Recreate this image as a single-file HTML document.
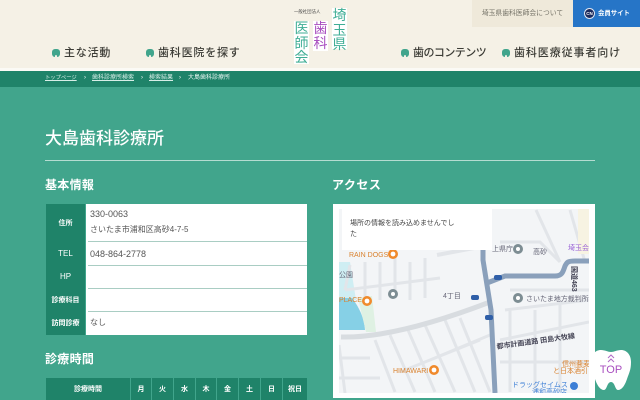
<!DOCTYPE html>
<html lang="ja"><head><meta charset="utf-8"><title>大島歯科診療所</title>
<style>
*{box-sizing:border-box;margin:0;padding:0}
html,body{width:640px;height:400px;overflow:hidden}
body{position:relative;background:#41a58c;font-family:"Liberation Sans","Noto Sans CJK JP",sans-serif;color:#444}
.a{position:absolute;white-space:nowrap}
.nav{font-size:11px;font-weight:500;color:#3c3c36;letter-spacing:.8px;line-height:16px;top:45px}
.tooth{position:absolute;top:49px;width:8px;height:8px;background:#41a58c;border-radius:3px 3px 3px 3px}
.tooth::after{content:"";position:absolute;left:3px;bottom:0;width:2px;height:2px;background:#f5f1e6;border-radius:1px 1px 0 0}
.v{position:absolute;background:#fff;width:15px;font-size:14px;line-height:14.5px;text-align:center;white-space:normal}
.lb{position:absolute;left:46px;width:39px;background:#1f8369;color:#fff;font-size:7px;font-weight:700;display:flex;align-items:center;justify-content:center}
.rw{position:absolute;left:86px;width:221px;background:#fff;font-size:9px;color:#555;padding-left:4px;display:flex;flex-direction:column;justify-content:center;line-height:14px}
.sep{position:absolute;left:88px;width:219px;height:1px;background:#a9cdc3}
.h{position:absolute;top:378px;height:22px;background:#1f8369;color:#fff;font-size:7px;font-weight:700;display:flex;align-items:center;justify-content:center}
.bc{font-size:6px;line-height:9px;top:74px;color:#d7eee7}
</style></head><body>

<div class="a" style="left:0;top:0;width:640px;height:68px;background:#f5f1e6"></div>
<div class="a" style="left:0;top:68px;width:640px;height:3px;background:#fbfaf5"></div>
<div class="a" style="left:0;top:71px;width:640px;height:16px;background:#1f8369"></div>

<div class="a" style="left:472px;top:0;width:101px;height:27px;background:#efe9da;color:#77756a;font-size:6.8px;line-height:27px;text-align:center">埼玉県歯科医師会について</div>
<div class="a" style="left:573px;top:0;width:67px;height:27px;background:#2675c7;color:#fff;font-size:6.4px;font-weight:700;line-height:27px;padding-left:25px">会員サイト</div>
<div class="a" style="left:584px;top:8px;width:11px;height:11px;border-radius:50%;background:#1b2a5c;border:1px solid #dfe6f2;color:#fff;font-size:4.5px;line-height:9px;text-align:center;font-weight:700">CN</div>

<div class="tooth" style="left:52px"></div><div class="a nav" style="left:64px">主な活動</div>
<div class="tooth" style="left:146px"></div><div class="a nav" style="left:158px">歯科医院を探す</div>
<div class="tooth" style="left:401px"></div><div class="a nav" style="left:413px;letter-spacing:-.55px">歯のコンテンツ</div>
<div class="tooth" style="left:502px"></div><div class="a nav" style="left:514px;letter-spacing:.9px">歯科医療従事者向け</div>

<div class="a" style="left:294px;top:9px;font-size:4.4px;line-height:5px;color:#444">一般社団法人</div>
<div class="v" style="left:332px;top:8px;color:#3fae95;height:41px">埼玉県</div>
<div class="v" style="left:313px;top:21px;color:#a94fc0;height:30px">歯科</div>
<div class="v" style="left:294px;top:21px;color:#3fae95;height:43px">医師会</div>

<div class="a bc" style="left:45px;font-size:5.3px;text-decoration:underline">トップページ</div>
<div class="a bc" style="left:84px;color:#fff">›</div>
<div class="a bc" style="left:92px;text-decoration:underline">歯科診療所検索</div>
<div class="a bc" style="left:141px;color:#fff">›</div>
<div class="a bc" style="left:149px;text-decoration:underline">検索結果</div>
<div class="a bc" style="left:179px;color:#fff">›</div>
<div class="a bc" style="left:188px;color:#e6f4f0">大島歯科診療所</div>

<div class="a" style="left:45px;top:128px;font-size:17px;line-height:22px;color:#fff;font-weight:500">大島歯科診療所</div>
<div class="a" style="left:45px;top:160px;width:550px;height:1px;background:#b5dcd1"></div>
<div class="a" style="left:45px;top:177px;font-size:12px;line-height:16px;color:#fff;font-weight:700;letter-spacing:.3px">基本情報</div>
<div class="a" style="left:332px;top:177px;font-size:12px;line-height:16px;color:#fff;font-weight:700;letter-spacing:.5px">アクセス</div>

<div class="lb" style="top:204px;height:37px">住所</div>
<div class="lb" style="top:241px;height:24px;font-size:8px;font-weight:400">TEL</div>
<div class="lb" style="top:265px;height:23px;font-size:8px;font-weight:400">HP</div>
<div class="lb" style="top:288px;height:23px">診療科目</div>
<div class="lb" style="top:311px;height:24px">訪問診療</div>
<div class="rw" style="top:204px;height:131px"></div>
<div class="rw a" style="top:207px;height:30px;background:none;line-height:15px"><div>330-0063</div><div style="font-size:8px">さいたま市浦和区高砂4-7-5</div></div>
<div class="rw a" style="top:243px;height:22px;background:none">048-864-2778</div>
<div class="rw a" style="top:312px;height:22px;background:none;font-size:8px">なし</div>
<div class="sep" style="top:241px"></div>
<div class="sep" style="top:265px"></div>
<div class="sep" style="top:288px"></div>
<div class="sep" style="top:311px"></div>

<div class="a" style="left:45px;top:351px;font-size:12px;line-height:16px;color:#fff;font-weight:700;letter-spacing:.3px">診療時間</div>
<div class="h" style="left:46px;width:84px">診療時間</div>
<div class="h" style="left:131px;width:20px">月</div>
<div class="h" style="left:152px;width:21px">火</div>
<div class="h" style="left:174px;width:21px">水</div>
<div class="h" style="left:196px;width:20px">木</div>
<div class="h" style="left:217px;width:21px">金</div>
<div class="h" style="left:239px;width:21px">土</div>
<div class="h" style="left:261px;width:21px">日</div>
<div class="h" style="left:283px;width:24px">祝日</div>

<div class="a" style="left:333px;top:204px;width:262px;height:194px;background:#fff"></div>
<svg class="a" style="left:339px;top:209px" width="250" height="184" viewBox="339 209 250 184">
<rect x="339" y="209" width="250" height="184" fill="#f3f5f7"/>
<path d="M339 262H350L356 300H339Z" fill="#cfeef3"/>
<path d="M339 298H352C358 306 364 316 365 330H339Z" fill="#86d0e6"/>
<path d="M358 298L372 296L376 332L366 332Z" fill="#dff1e3"/>
<g stroke="#e2e5e9" stroke-width="3" fill="none">
<path d="M350 265L345 290M365 262V300M380 262V300M395 258V298M410 262V300M425 258V298M345 290L440 278"/>
<path d="M375 340L395 392M390 335L415 392M408 330L435 392M425 325L455 392M445 320L475 392M460 318L490 392"/>
<path d="M339 358H370M339 378H380M400 372L480 340M430 360L490 335M339 345L345 393"/>
<path d="M500 340L589 322M510 392V310M535 392V310M560 392V300M500 362H589M510 290H589M536 210L560 262M570 210L585 262M500 242H540L560 262M505 310L589 300"/>
</g>
<path d="M341 337C380 338 430 325 490 302" stroke="#d8dce0" stroke-width="5" fill="none"/>
<path d="M437 255L490 245" stroke="#e2e5e9" stroke-width="4" fill="none"/>
<path d="M483 209V260L491 310L495 393" stroke="#8aa0bb" stroke-width="5" fill="none"/>
<path d="M487 283L505 276H555C562 276 563 272 565 266C567 262 568 261 575 261H589" stroke="#8aa0bb" stroke-width="5" fill="none"/>
<rect x="578" y="209" width="11" height="45" fill="#f7f3e2"/>
<circle cx="393" cy="254" r="5" fill="#f08a2c"/><circle cx="393" cy="254" r="2.4" fill="#fff"/>
<circle cx="367" cy="301" r="5" fill="#f08a2c"/><circle cx="367" cy="301" r="2.4" fill="#fff"/>
<circle cx="434" cy="370" r="5" fill="#f08a2c"/><circle cx="434" cy="370" r="2.4" fill="#fff"/>
<circle cx="393" cy="294" r="5" fill="#7d8d93"/><circle cx="393" cy="294" r="2" fill="#fff"/>
<circle cx="518" cy="249" r="5" fill="#7d8d93"/><circle cx="518" cy="249" r="2" fill="#fff"/>
<circle cx="518" cy="298" r="5" fill="#7d8d93"/><circle cx="518" cy="298" r="2" fill="#fff"/>
<circle cx="574" cy="386" r="4" fill="#3d7fd6"/>
<rect x="485" y="315" width="8" height="5" rx="2" fill="#2f5fa8"/><rect x="471" y="295" width="8" height="5" rx="2" fill="#2f5fa8"/><rect x="494" y="275" width="8" height="5" rx="2" fill="#2f5fa8"/>
<g font-family="Liberation Sans,Noto Sans CJK JP,sans-serif">
<text x="349" y="257" font-size="7" fill="#d9822f">RAIN DOGS</text>
<text x="339" y="302" font-size="7" fill="#d9822f">PLACE</text>
<text x="393" y="373" font-size="7" fill="#d9822f">HIMAWARI</text>
<text x="339" y="277" font-size="7" fill="#667">公園</text>
<text x="443" y="298" font-size="7" fill="#667">4丁目</text>
<text x="492" y="251" font-size="7" fill="#667">上県庁</text>
<text x="533" y="254" font-size="7" fill="#667">高砂</text>
<text x="526" y="301" font-size="7" fill="#667">さいたま地方裁判所</text>
<text x="568" y="250" font-size="7" fill="#9a62d6">埼玉会</text>
<text x="497" y="349" font-size="7" fill="#445" font-weight="700" transform="rotate(-8 497 349)">都市計画道路 田島大牧線</text>
<text x="562" y="366" font-size="7" fill="#d9822f">信州蕎麦</text>
<text x="553" y="373" font-size="7" fill="#d9822f">と日本酒引</text>
<text x="512" y="387" font-size="7" fill="#3d7fd6">ドラッグセイムス</text>
<text x="532" y="394" font-size="7" fill="#3d7fd6">浦和高砂店</text>
<text transform="translate(572 266) rotate(90)" font-size="7" fill="#445" font-weight="700">国道463</text>
</g>
</svg>
<div class="a" style="left:342px;top:209px;width:150px;height:41px;background:#fff;color:#444;font-size:7px;line-height:10.5px;padding:10px 36px 0 8px;white-space:normal">場所の情報を読み込めませんでした</div>

<svg class="a" style="left:590px;top:349px" width="42" height="42" viewBox="0 0 42 42">
<path d="M11 1C15 1 18 3 21 3C24 3 27 1 31 1C37 1 41 6 41 13C41 21 39 24 37 30C35 36 32 41 28 41C25 41 25 33 21 33C17 33 17 41 14 41C10 41 7 36 5 30C3 24 1 21 1 13C1 6 5 1 11 1Z" fill="#fff"/>
<path d="M18 9L21 6L24 9M18 13L21 10L24 13" stroke="#b06ac6" stroke-width="1" fill="none"/>
<text x="21" y="24" text-anchor="middle" font-size="11" fill="#a94fc0" font-family="Liberation Sans,sans-serif">TOP</text>
</svg>
</body></html>
